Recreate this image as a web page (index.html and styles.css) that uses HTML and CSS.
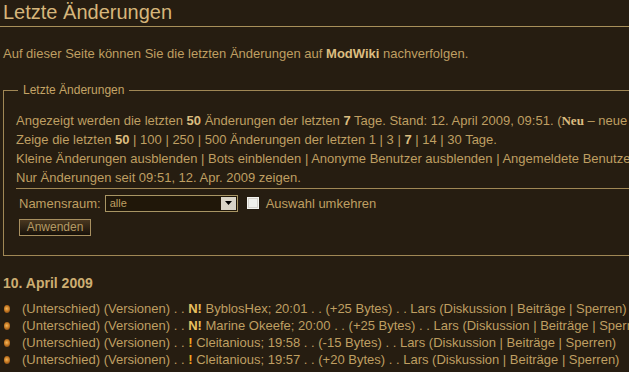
FILE: index.html
```html
<!DOCTYPE html>
<html lang="de">
<head>
<meta charset="utf-8">
<title>Letzte Änderungen – ModWiki</title>
<link rel="stylesheet" href="styles.css">
</head>
<body>
<div class="page">
  <h1 class="title">Letzte Änderungen</h1>
  <p class="intro">Auf dieser Seite können Sie die letzten Änderungen auf <b>ModWiki</b> nachverfolgen.</p>

  <fieldset class="rc-options">
    <legend>Letzte Änderungen</legend>
    <div class="opt-line">Angezeigt werden die letzten <b>50</b> Änderungen der letzten <b>7</b> Tage. Stand: 12. April 2009, 09:51. (<abbr class="newpage">Neu</abbr> – neue Seite, <abbr class="minor">K</abbr> – kleine Änderung, <abbr class="bot">B</abbr> – Änderung durch einen Bot, (±123) – Größenänderung)</div>
    <div class="opt-line">Zeige die letzten <b>50</b> | 100 | 250 | 500 Änderungen der letzten 1 | 3 | <b>7</b> | 14 | 30 Tage.</div>
    <div class="opt-line">Kleine Änderungen ausblenden | Bots einblenden | Anonyme Benutzer ausblenden | Angemeldete Benutzer ausblenden | Eigene Beiträge ausblenden</div>
    <div class="opt-line">Nur Änderungen seit 09:51, 12. Apr. 2009 zeigen.</div>
    <hr class="sep">
    <div class="ns-row">
      <label class="ns-label">Namensraum:</label>
      <div class="select">
        <span class="select-value">alle</span>
        <span class="select-btn"><svg width="7" height="4" viewBox="0 0 7 4"><path d="M0 0h7L3.5 4z" fill="#000"/></svg></span>
      </div>
      <span class="checkbox"></span>
      <span class="cb-label">Auswahl umkehren</span>
    </div>
    <div class="btn-row"><button class="btn">Anwenden</button></div>
  </fieldset>

  <h4 class="day">10. April 2009</h4>
  <ul class="changes">
    <li><span class="bullet"></span><span class="line">(Unterschied) (Versionen) . . <b class="new">N!</b> ByblosHex; 20:01 . . (+25 Bytes) . . Lars (Diskussion | Beiträge | Sperren)</span></li>
    <li><span class="bullet"></span><span class="line">(Unterschied) (Versionen) . . <b class="new">N!</b> Marine Okeefe; 20:00 . . (+25 Bytes) . . Lars (Diskussion | Beiträge | Sperren)</span></li>
    <li><span class="bullet"></span><span class="line">(Unterschied) (Versionen) . . <b class="unp">!</b> Cleitanious; 19:58 . . (-15 Bytes) . . Lars (Diskussion | Beiträge | Sperren)</span></li>
    <li><span class="bullet"></span><span class="line">(Unterschied) (Versionen) . . <b class="unp">!</b> Cleitanious; 19:57 . . (+20 Bytes) . . Lars (Diskussion | Beiträge | Sperren)</span></li>
  </ul>
</div>
</body>
</html>
```

FILE: styles.css
```css
html, body {
  margin: 0;
  padding: 0;
  background: #261d11;
  overflow: hidden;
}
body {
  font-family: "Liberation Sans", Arial, sans-serif;
  font-size: 13px;
  color: #bf9f62;
}
.page {
  width: 1100px;
  padding: 0 0 0 3px;
}
b { color: #dcbd80; }
.title {
  margin: 0 0 0 -3px;
  padding: 2px 0 3px 3px;
  font-size: 20px;
  font-weight: normal;
  line-height: 21px;
  color: #d6b67b;
  border-bottom: 1px solid #a8905a;
}
.intro {
  margin: 19px 0 0 0;
  line-height: 16px;
}
.rc-options {
  margin: 21px 0 0 0;
  padding: 14px 0 19px 12px;
  border: 1px solid #a08755;
  min-width: 0;
}
.rc-options legend {
  margin-left: 2px;
  padding: 0 5px;
  font-size: 12px;
  line-height: 14px;
  color: #c4a466;
}
.opt-line {
  line-height: 19px;
  white-space: nowrap;
}
abbr { text-decoration: none; }
.newpage, .minor, .bot {
  font-family: "Liberation Serif", "Times New Roman", serif;
  font-weight: bold;
  color: #dcbd80;
}
.sep {
  margin: 1px 0 0 0;
  border: 0;
  border-top: 1px solid #a08755;
  height: 0;
}
.ns-row {
  display: flex;
  align-items: center;
  margin-top: 5px;
  height: 18px;
}
.ns-label {
  margin-left: 3px;
  margin-right: 4px;
}
.select {
  width: 131px;
  height: 15px;
  border: 1px solid #a89564;
  background: #201709;
  display: flex;
  align-items: center;
  justify-content: space-between;
}
.select-value {
  padding-left: 4px;
  font-size: 11px;
  color: #bf9f62;
}
.select-btn {
  width: 15px;
  height: 13px;
  margin-right: 1px;
  background: #d9d4c7;
  display: flex;
  align-items: center;
  justify-content: center;
}
.checkbox {
  width: 10px;
  height: 10px;
  margin-left: 9px;
  border: 1px solid #f4f4f0;
  background: #f0f0ec;
  box-shadow: inset 0 0 0 1px #d6d2cc;
}
.cb-label {
  margin-left: 7px;
}
.btn-row {
  margin-top: 7px;
  display: flex;
}
.btn {
  margin-left: 3px;
  width: 72px;
  height: 17px;
  padding: 0;
  border: 1px solid #a89060;
  background: linear-gradient(#4a3820, #17110a);
  color: #b59a64;
  font-family: "Liberation Sans", Arial, sans-serif;
  font-size: 12px;
  line-height: 15px;
}
.day {
  margin: 19px 0 0 0;
  font-size: 14px;
  line-height: 17px;
  font-weight: bold;
  color: #cdae72;
}
.changes {
  list-style: none;
  margin: 8px 0 0 0;
  padding: 0;
}
.changes li {
  display: flex;
  align-items: center;
  height: 17px;
}
.line {
  white-space: pre;
  line-height: 17px;
}
.bullet {
  width: 6px;
  height: 8px;
  border-radius: 50%;
  margin: 0 12px 0 1px;
  background: radial-gradient(circle at 45% 45%, #f0b860 0, #c97a22 45%, #6a3a10 100%);
  flex: none;
}
.new { color: #e6c060; }
.unp { color: #f0a420; }
```
